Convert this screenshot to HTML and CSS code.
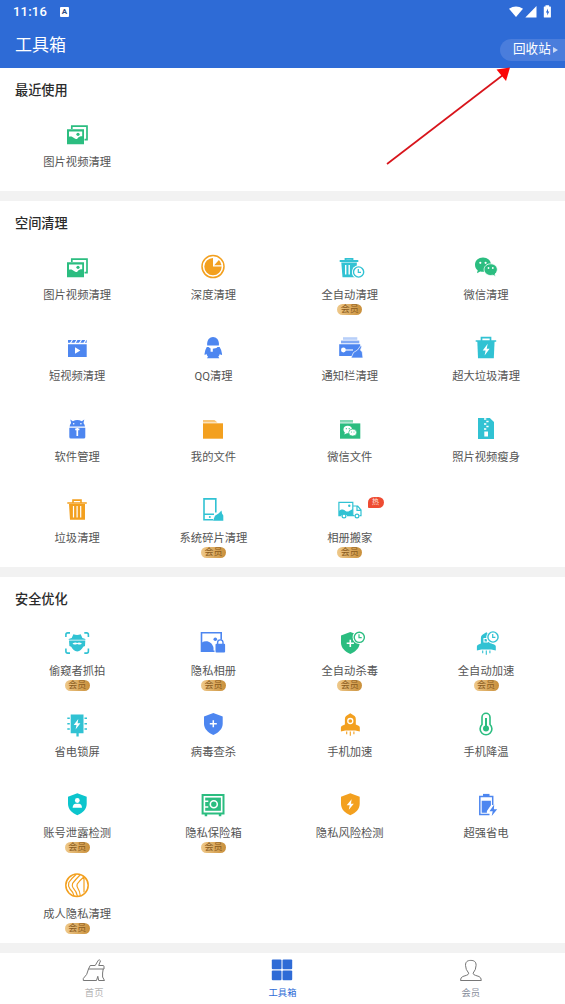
FILE: index.html
```html
<!DOCTYPE html>
<html lang="zh-CN">
<head>
<meta charset="utf-8">
<title>工具箱</title>
<link rel="stylesheet" href="styles.css">
</head>
<body>
<svg class="defs" aria-hidden="true">
  <symbol id="photos" viewBox="0 0 28 28">
    <path d="M8.800 9V6.100h15.200v13.500h-2.500" fill="none" stroke="currentColor" stroke-width="1.700"/>
    <path fill-rule="evenodd" d="M4 9.200h17v15H4zM6 11.500v5.200c2-.7 3.600-.1 5 1.300 1.600 1.300 2.600 1.500 3.700.2 1-1.400 2.300-1.900 4.500-1.900v-4.800z" fill="currentColor"/>
    <circle cx="15" cy="14.300" r="1.600" fill="currentColor"/>
  </symbol>
  <symbol id="shield" viewBox="0 0 28 28">
    <path d="M14.300 3l9.400 3.500v7.200c0 5-4 8.900-9.400 11.300C8.900 22.600 5 18.700 5 13.700V6.500z" fill="currentColor"/>
  </symbol>
  <symbol id="clock" viewBox="0 0 14 14">
    <circle cx="7" cy="7" r="6.800" fill="#fff"/>
    <circle cx="7" cy="7" r="5.100" fill="#fff" stroke="currentColor" stroke-width="1.400"/>
    <path d="M6.700 4v3.300h2.700" fill="none" stroke="currentColor" stroke-width="1.200"/>
  </symbol>
  <symbol id="wechat" viewBox="0 0 28 28">
    <path d="M11 4.500c4.500 0 8 3 8 7.200s-3.500 7.100-8 7.100c-1 0-2-.1-2.800-.4L5 20.200l.7-3C4 15.900 3 14 3 11.700 3 7.500 6.500 4.500 11 4.500z" fill="currentColor"/>
    <path d="M18.700 10.800c3.700 0 6.600 2.500 6.600 5.800 0 1.900-.9 3.400-2.300 4.500l.5 2.400-2.500-1.300c-.7.200-1.500.3-2.300.3-3.700 0-6.600-2.500-6.600-5.900s2.900-5.800 6.600-5.800z" fill="currentColor" stroke="#fff" stroke-width=".8"/>
    <g fill="#fff"><circle cx="8.300" cy="9.800" r="1.100"/><circle cx="13.600" cy="9.800" r="1.100"/><circle cx="16.500" cy="15" r=".9"/><circle cx="20.800" cy="15" r=".9"/></g>
  </symbol>
  <symbol id="rocket" viewBox="0 0 28 28">
    <path d="M14.300 3.300L18.600 6q1.200 1 1.200 3v5.500l2.800 1.200q1.200.6 1.200 1.900v4l-4.500-1.100H9.200L4.900 21.600v-4q0-1.300 1.200-1.900l2.800-1.200V9q0-2 1.200-3z" fill="currentColor"/>
    <path d="M10.700 21.600v2.700M14.300 21.600v4.100M17.900 21.600v2.700" fill="none" stroke="currentColor" stroke-width="1.100"/>
  </symbol>
</svg>

<header class="header">
  <div class="status">
    <span class="time">11:16</span>
    <span class="input-mark">A</span>
    <svg class="signals" viewBox="0 0 44 14">
      <path d="M1 3.800Q8 -.8 15 3.800L8 12z"/>
      <path d="M28.500 1v11.400H17.300z"/>
      <path fill-rule="evenodd" d="M37.500.300h3.600v1.200h1.200q.6 0 .6.600v9.800q0 .7-.7.700h-5.700q-.7 0-.7-.7V2.100q0-.6.600-.6h1.100zM40 3.500l-2.100 4h1.300v3l2.100-4H40z"/>
    </svg>
  </div>
  <div class="bar">
    <h1>工具箱</h1>
    <a class="recycle"><span>回收站</span><i></i></a>
  </div>
</header>

<main>
<section class="panel">
  <h2>最近使用</h2>
  <div class="grid">
    <div class="tool green"><svg><use href="#photos"/></svg><span>图片视频清理</span></div>
  </div>
</section>

<section class="panel">
  <h2>空间清理</h2>
  <div class="grid">
    <div class="tool green"><svg><use href="#photos"/></svg><span>图片视频清理</span></div>
    <div class="tool orange"><svg viewBox="0 0 28 28"><circle cx="14" cy="13.600" r="11" fill="none" stroke="currentColor" stroke-width="1.500"/><path d="M14 13.600V4.900a8.700 8.700 0 1 0 8.700 8.700z" fill="currentColor"/><path d="M15.200 12.200l4.700-5.200q2.200 2.200 2.600 5.200z" fill="currentColor"/></svg><span>深度清理</span></div>
    <div class="tool cyan"><svg viewBox="0 0 28 28"><path d="M3.700 8h18.600M9.500 7.500V5.800h7v1.700" fill="none" stroke="currentColor" stroke-width="1.800"/><path d="M5.300 9.500h15.500v14.700H6.500z" fill="currentColor"/><path d="M9.700 12v9.500M13.200 12v9.500" stroke="#fff" stroke-width="1.400"/><use href="#clock" x="15.600" y="12" width="14" height="14"/></svg><span>全自动清理</span><b>会员</b></div>
    <div class="tool green"><svg><use href="#wechat"/></svg><span>微信清理</span></div>

    <div class="tool blue"><svg viewBox="0 0 28 28"><path d="M5 6h18.700v2.700H5zM5 10.200h18.700V23H5z" fill="currentColor"/><path d="M9.500 5.700l-2 3.400M14 5.700l-2 3.400M18.500 5.700l-2 3.400M23 5.700l-2 3.400" stroke="#fff" stroke-width="1.100"/><path d="M12 13.300l5.300 3.200-5.300 3.200z" fill="#fff"/></svg><span>短视频清理</span></div>
    <div class="tool blue"><svg viewBox="0 0 28 28"><path d="M8.200 11.500C7 .3 21 .3 19.900 11.500z" fill="currentColor"/><path d="M7.800 13h12.800q2 2.700 2.500 7.200c-.2 1.300-1.300.9-2.300-.4-.2 1.400-.8 2.200-1.500 2.800l1 1.700H8l1-1.700c-.8-.8-1.400-1.500-1.600-2.800-1 1.300-1.900 1.500-1.900.2Q6 15.700 7.800 13z" fill="currentColor"/><path d="M8.500 12.200h10.700L17.500 14l-3.700.8v3h-2.200v-3.300z" fill="#fff"/></svg><span>QQ清理</span></div>
    <div class="tool blue"><svg viewBox="0 0 28 28"><path d="M7 3.200h14.300v2.600H7z" fill="currentColor" opacity=".4"/><path d="M5 6.600h18.300v2.700H5z" fill="currentColor" opacity=".7"/><path d="M3.200 10.300h21v4.800l-7.500 7H3.200z" fill="currentColor"/><circle cx="7.400" cy="16" r="2.400" fill="#fff"/><path d="M9 16h8" stroke="#fff" stroke-width="1.100"/><path d="M15 24l2.500-5.500 4-2.500 3.300-4.500 1 .7-1.300 4 1.700 1.500.8 6.300z" fill="currentColor" stroke="#fff" stroke-width=".7"/></svg><span>通知栏清理</span></div>
    <div class="tool cyan"><svg viewBox="0 0 28 28"><path d="M3.700 7h20.500M9.500 7V3.600h9V7" fill="none" stroke="currentColor" stroke-width="1.700"/><path d="M5.300 7h17.300l-.8 17.300H6z" fill="currentColor"/><path d="M15.700 9.700l-5 6.800h2.900l-1 5 5-6.800h-2.900z" fill="#fff"/></svg><span>超大垃圾清理</span></div>

    <div class="tool blue"><svg viewBox="0 0 28 28"><path d="M7.300 4.500l2.500 1.700q4.500-2.200 9 0l2.500-1.700-.8 3.400q1.300 1.700 1.500 3.600H6.600q.2-1.900 1.500-3.600z" fill="currentColor"/><path d="M6.300 12.700h16V22q0 1.600-1.600 1.600H7.900q-1.600 0-1.600-1.600z" fill="currentColor"/><path d="M14.300 13v8M12.200 14.300h4.200" stroke="#fff" stroke-width="1.700"/><circle cx="10.700" cy="8.700" r=".8" fill="#fff"/><circle cx="17.900" cy="8.700" r=".8" fill="#fff"/></svg><span>软件管理</span></div>
    <div class="tool orange"><svg viewBox="0 0 28 28"><path d="M4 4.900h11.500l3 2.700H4z" fill="currentColor" opacity=".6"/><path d="M4 8.300h20v15.400H4z" fill="currentColor"/></svg><span>我的文件</span></div>
    <div class="tool green"><svg viewBox="0 0 28 28"><path d="M4 5h13v2.600H4z" fill="currentColor" opacity=".6"/><path d="M4 8.400h20.300v15.300H4z" fill="currentColor"/><ellipse cx="11.700" cy="14.500" rx="4.200" ry="3.700" fill="#fff"/><path d="M9 17l-.7 2.500 3-1.500z" fill="#fff"/><ellipse cx="16.700" cy="17.600" rx="4" ry="3.500" fill="#fff" stroke="currentColor" stroke-width=".7"/><g fill="currentColor"><circle cx="10.300" cy="13.700" r=".6"/><circle cx="13.200" cy="13.700" r=".6"/><circle cx="15.400" cy="17" r=".5"/><circle cx="18" cy="17" r=".5"/></g></svg><span>微信文件</span></div>
    <div class="tool cyan"><svg viewBox="0 0 28 28"><path d="M6 3h11.800L22 7v17H6z" fill="currentColor"/><path d="M12 4h2.300M14.300 6.500h2.300M12 9h2.300M14.300 11.500h2.300M12 14h2.300" stroke="#fff" stroke-width="1.700"/><path d="M12.300 16.500h3.700v5h-3.700z" fill="#fff"/></svg><span>照片视频瘦身</span></div>

    <div class="tool orange"><svg viewBox="0 0 28 28"><path d="M4.300 7h19.500M10 6.700V4.100h8v2.600" fill="none" stroke="currentColor" stroke-width="1.600"/><path d="M6 8h16v15.700H7z" fill="currentColor"/><path d="M10.500 10v11.500M14.100 10v11.500M17.700 10v11.500" stroke="#fff" stroke-width="1.200"/></svg><span>垃圾清理</span></div>
    <div class="tool cyan"><svg viewBox="0 0 28 28"><path d="M16.800 16.500V2.900H5v20.900h9M5 18.200h10" fill="none" stroke="currentColor" stroke-width="1.600"/><circle cx="10.800" cy="20.900" r="1" fill="currentColor"/><path d="M14 24.800l2-5 3.500-2.200 3-3 .5 3 1.300 2v5.200z" fill="currentColor"/></svg><span>系统碎片清理</span><b>会员</b></div>
    <div class="tool cyan"><svg viewBox="0 0 28 28"><path d="M16.800 19.500V6.300H2.900v13.300h2.500M11 19.700h7.500M17 10h4.700l3.300 4v5.700h-1.500M21 10v4.300h3.700" fill="none" stroke="currentColor" stroke-width="1.200"/><path d="M3 15c3-2.300 4.600-1.300 6.500 0 2.300 1.500 3.700 0 7.300-2v6H3z" fill="currentColor"/><circle cx="13.300" cy="9.800" r="1.200" fill="currentColor"/><g fill="#fff" stroke="currentColor" stroke-width="1.200"><circle cx="8" cy="20" r="1.900"/><circle cx="21" cy="20" r="1.900"/></g></svg><em>热</em><span>相册搬家</span><b>会员</b></div>
  </div>
</section>

<section class="panel">
  <h2>安全优化</h2>
  <div class="grid">
    <div class="tool cyan"><svg viewBox="0 0 28 28"><path d="M2.900 8V5.700q0-1.800 1.800-1.800H7M21.300 3.900h2.300q1.800 0 1.800 1.800V8M25.400 19.500v2.800q0 1.800-1.800 1.800h-2.300M7 24.100H4.700q-1.800 0-1.800-1.800v-2.800" fill="none" stroke="currentColor" stroke-width="1.600"/><path d="M8.700 9l1.700-3.800q3.700 1.500 7.300 0L19.400 9q3 .5 3.400 1.700H5.300Q5.700 9.500 8.700 9zM6 11.500h16.300l-.3 5.500-1.800.8q-2 4.200-6 4.700-4-.5-6-4.700L6.400 17z" fill="currentColor"/><path d="M9.500 14.500q2.500-1.600 4.700-.6 2.200-1 4.700.6-1 1.500-3.200.9l-1.500-.5-1.500.5q-2.200.6-3.200-.9z" fill="#fff"/></svg><span>偷窥者抓拍</span><b>会员</b></div>
    <div class="tool blue"><svg viewBox="0 0 28 28"><path d="M15.500 22.200H2.500V3.800h19.700v7" fill="none" stroke="currentColor" stroke-width="1.600"/><path d="M2.500 13.700c5-3 10.500-1 12 5v3.500h-12z" fill="currentColor"/><circle cx="16.300" cy="10.300" r="1.800" fill="currentColor"/><path d="M18.600 15v-1.400a2.700 2.700 0 0 1 5.400 0V15" fill="none" stroke="currentColor" stroke-width="1.400"/><rect x="16.500" y="14.700" width="9.600" height="8.700" rx="1" fill="currentColor"/></svg><span>隐私相册</span><b>会员</b></div>
    <div class="tool green"><svg viewBox="0 0 28 28"><use href="#shield"/><path d="M14.300 10.700v7.200M10.700 14.300h7.200" stroke="#fff" stroke-width="1.600"/><use href="#clock" x="16.300" y="1.300" width="14" height="14"/></svg><span>全自动杀毒</span><b>会员</b></div>
    <div class="tool cyan"><svg viewBox="0 0 28 28"><use href="#rocket"/><path d="M12 13V9.500h3.500V13z" fill="none" stroke="#fff" stroke-width="1.100"/><use href="#clock" x="14" y="1" width="14" height="14"/></svg><span>全自动加速</span><b>会员</b></div>

    <div class="tool cyan"><svg viewBox="0 0 28 28"><path d="M7.700 4.500h12.800v18.800h-4.800v3.200h-2.300v-3.200H7.700z" fill="currentColor"/><path d="M4.300 8.300h2.500M4.300 13.700h2.500M4.300 19h2.500M21.500 8.300H24M21.500 13.700H24M21.500 19H24" stroke="currentColor" stroke-width="1.600"/><path d="M15.300 9l-4.600 6h2.800l-.9 4.500 4.800-6.200h-2.800z" fill="#fff"/></svg><span>省电锁屏</span></div>
    <div class="tool blue"><svg viewBox="0 0 28 28"><use href="#shield"/><path d="M14.300 10.200v7M10.800 13.700h7" stroke="#fff" stroke-width="1.500"/></svg><span>病毒查杀</span></div>
    <div class="tool orange"><svg viewBox="0 0 28 28"><use href="#rocket"/><circle cx="14.300" cy="11" r="2.500" fill="none" stroke="#fff" stroke-width="1.300"/></svg><span>手机加速</span></div>
    <div class="tool green"><svg viewBox="0 0 28 28"><path d="M10 14.500V7.300a4 4 0 0 1 8 0v7.200a5.900 5.900 0 1 1-8 0z" fill="none" stroke="currentColor" stroke-width="1.600"/><path d="M14 8v10" stroke="currentColor" stroke-width="2"/><circle cx="14" cy="18.600" r="3" fill="currentColor"/></svg><span>手机降温</span></div>

    <div class="tool teal"><svg viewBox="0 0 28 28"><use href="#shield" y="-.7"/><circle cx="14.300" cy="9.500" r="2.400" fill="#fff"/><path d="M9.600 16.800q.3-4 3.200-4h3q2.900 0 3.200 4z" fill="#fff"/></svg><span>账号泄露检测</span><b>会员</b></div>
    <div class="tool green"><svg viewBox="0 0 28 28"><path d="M3.600 4h20.900v18.400H3.600z" fill="none" stroke="currentColor" stroke-width="2"/><path d="M6.200 6.600h15.700v13.200H6.200z" fill="currentColor"/><circle cx="14.800" cy="13.200" r="3.500" fill="none" stroke="#fff" stroke-width="1.600"/><path d="M6 10.300h3.300M6 16h3.300" stroke="#fff" stroke-width="1.400"/><path d="M5.700 23h2.500v2.200H5.700zM19.800 23h2.500v2.200h-2.500z" fill="currentColor"/></svg><span>隐私保险箱</span><b>会员</b></div>
    <div class="tool orange"><svg viewBox="0 0 28 28"><use href="#shield" y="-.7"/><path d="M15.600 8.300l-4.900 6h3l-.9 4.500 5-6.100H15z" fill="#fff"/></svg><span>隐私风险检测</span></div>
    <div class="tool blue"><svg viewBox="0 0 28 28"><path d="M20.700 14V5.500H7.800v18h9.700" fill="none" stroke="currentColor" stroke-width="1.500"/><path d="M11 2.900h6.500v2.600H11z" fill="currentColor"/><path d="M9.700 9.700h9.200v4.600l-4 5.700v1.700H9.700z" fill="currentColor"/><path d="M22.200 13.500l-4.700 6.800h3.200l-1 4.700 5.500-6.800h-3.300z" fill="currentColor"/></svg><span>超强省电</span></div>

    <div class="tool orange"><svg viewBox="0 0 28 28" fill="none" stroke="currentColor" stroke-width="1.200"><circle cx="14" cy="13.300" r="11.200" stroke-width="1.500"/><path d="M13.300 2.300Q9 6 5.800 10.500q-1 3.500 1 6.200 3.500 3.300 4.200 7.500M17.300 2.800Q13 7 9.600 11.300q-.8 2.700.4 4.300 3.500 4 4.500 8.700M20.500 5.300q-3.500 3-6.300 6.700-.6 2 .3 3.500 2.500 4 2.800 8.300M21 5v15.500" /></svg><span>成人隐私清理</span><b>会员</b></div>
  </div>
</section>
</main>

<nav class="tabs">
  <a><svg viewBox="0 0 24 24" fill="none" stroke="#777" stroke-width="1"><path d="M6.500 11L8.200 7.500h5L16.300 2.300q1.500-1 2.200.5L16.700 7.500H21q1 0 1 1V11zM6.500 11Q5.500 17 1.300 20.500v2H14.500l1.300-4.200.9 4.200h5.800L20.600 19q-.3-4 .6-8"/></svg><span>首页</span></a>
  <a class="active"><svg viewBox="0 0 24 24" fill="currentColor"><rect x="1.800" y="1.600" width="9.700" height="9.700" rx="1"/><rect x="12.500" y="1.600" width="9.700" height="9.700" rx="1"/><rect x="1.800" y="12.500" width="9.700" height="9.700" rx="1"/><rect x="12.500" y="12.500" width="9.700" height="9.700" rx="1"/></svg><span>工具箱</span></a>
  <a class="member"><svg viewBox="0 0 24 24" fill="none" stroke="#777" stroke-width="1"><path d="M9.700 15.200Q6.500 11.500 6.500 7.300C6.500 3.500 8.700 2.400 11.800 2.400s5.300 1.100 5.300 4.900q0 4.200-3 7.900.2 1.600 2.200 2.100l3.700 1.200q2.300.9 2.300 4H1.500q0-3.100 2.300-4l3.700-1.200q2-.5 2.200-2.100z"/></svg><span>会员</span></a>
</nav>

<svg class="pointer" viewBox="0 0 126 100"><path d="M2 98L118 9" stroke="#d8141b" stroke-width="1.700"/><path d="M125 1.500l-13.500 2L121 15z" fill="#fa0707"/></svg>
</body>
</html>
```

FILE: styles.css
```css
* { box-sizing: border-box; }
body {
  position: relative;
  margin: 0;
  width: 565px;
  height: 1004px;
  overflow: hidden;
  display: flex;
  flex-direction: column;
  background: #fff;
  color: #4d4d4d;
  font-family: Roboto, "Noto Sans CJK SC", sans-serif;
}
h1, h2 { margin: 0; }
.defs { position: absolute; width: 0; height: 0; }

.header { height: 68px; background: #2e6bd6; color: #fff; }
.status { display: flex; align-items: center; height: 23px; padding: 0 13px 0 13px; }
.time { width: 47px; font-size: 13px; font-weight: 500; letter-spacing: .2px; }
.input-mark {
  width: 9px;
  height: 10px;
  border-radius: 1px;
  background: #fff;
  color: #2e4d85;
  font-size: 8px;
  line-height: 10px;
  font-weight: 700;
  text-align: center;
}
.signals { width: 44px; height: 14px; margin-left: auto; fill: #fff; }
.bar { display: flex; justify-content: space-between; height: 45px; padding-left: 15px; }
.bar h1 { font-size: 17px; line-height: 45px; font-weight: 400; }
.recycle {
  display: flex;
  align-items: center;
  gap: 2px;
  width: 65px;
  height: 22px;
  margin-top: 16px;
  padding-left: 13px;
  border-radius: 11px 0 0 11px;
  background: #4a7ddc;
  font-size: 12.600px;
  line-height: 20px;
}
.recycle span { height: 22px; }
.recycle i {
  border: 3.500px solid transparent;
  border-left: 5px solid #c8d8f5;
  border-right: 0;
}

main { display: flex; flex-direction: column; gap: 10px; height: 885px; background: #f2f2f2; }
.panel { height: 366px; background: #fff; }
.panel:first-child { height: 123px; }
.panel h2 {
  height: 52px;
  padding: 0 15px;
  font-size: 13.200px;
  line-height: 46px;
  font-weight: 500;
  color: #2b2b2b;
}
.grid {
  display: grid;
  grid-template-columns: repeat(4, 136.300px);
  grid-auto-rows: 81px;
  padding-left: 9px;
}
.tool { position: relative; display: flex; flex-direction: column; align-items: center; }
.tool svg { width: 28px; height: 28px; flex: none; overflow: visible; }
.tool span {
  height: 23px;
  font-size: 11.300px;
  line-height: 30px;
  font-weight: 400;
  color: #555;
}
.tool b {
  width: 25px;
  height: 11px;
  border-radius: 6px;
  background: linear-gradient(90deg, #efc98b, #c98f3a);
  color: #8a5a1c;
  font-size: 9px;
  line-height: 11px;
  font-weight: 400;
  text-align: center;
}
.tool em {
  position: absolute;
  top: 1px;
  left: 86px;
  width: 16px;
  height: 11px;
  border-radius: 6px 6px 6px 1px;
  background: #ee4b32;
  color: #ffe2da;
  font-size: 7px;
  line-height: 11px;
  font-style: normal;
  text-align: center;
}
.green { color: #2bbd80; }
.orange { color: #f3a01f; }
.cyan { color: #31c2d3; }
.teal { color: #0cc5cd; }
.blue { color: #4d86f0; }

.tabs { display: grid; grid-template-columns: repeat(3, 1fr); height: 51px; background: #fff; }
.tabs a { display: flex; flex-direction: column; align-items: center; padding-top: 5px; color: #b5b5b5; }
.tabs svg { width: 24px; height: 24px; }
.tabs span { font-size: 9.300px; line-height: 22px; }
.tabs .active { color: #2e6bd6; }
.tabs .member { color: #858b99; }

.pointer { position: absolute; left: 385px; top: 66px; width: 126px; height: 100px; }
```
